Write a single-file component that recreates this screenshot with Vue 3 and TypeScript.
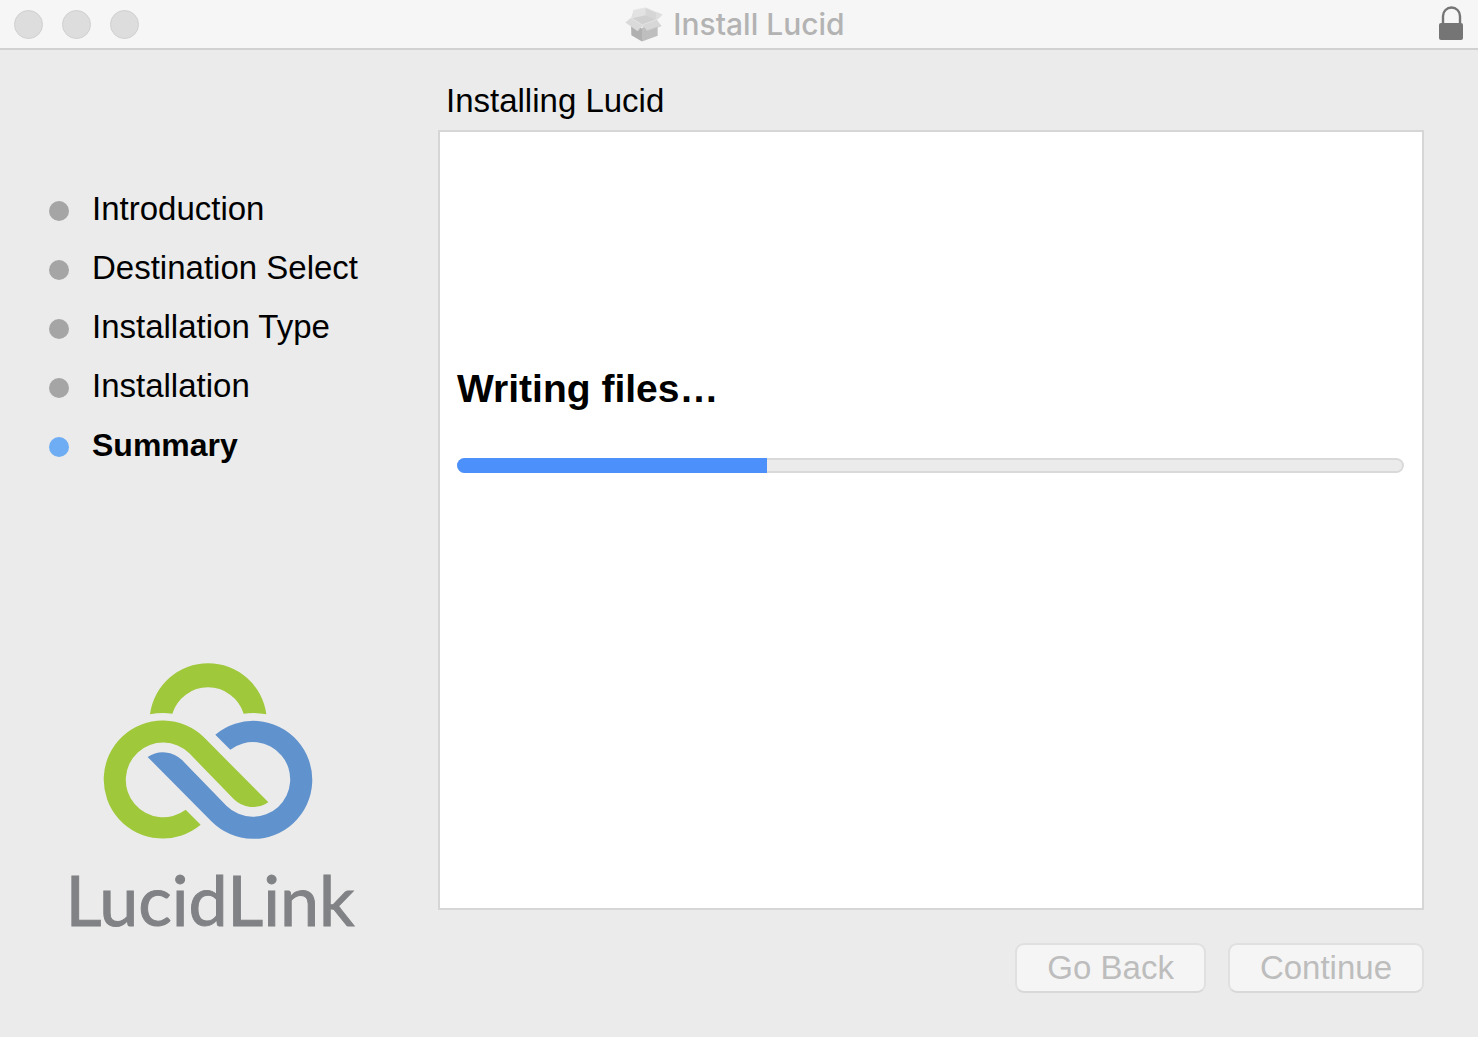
<script setup lang="ts">
import { ref } from 'vue'

interface Step {
  label: string
  current: boolean
}

const steps: Step[] = [
  { label: 'Introduction', current: false },
  { label: 'Destination Select', current: false },
  { label: 'Installation Type', current: false },
  { label: 'Installation', current: false },
  { label: 'Summary', current: true },
]

const progress = ref<number>(32.7)
</script>

<template>
  <div class="window">
    <header class="titlebar">
      <div class="lights">
        <button class="light" type="button" disabled aria-label="Close"></button>
        <button class="light" type="button" disabled aria-label="Minimize"></button>
        <button class="light" type="button" disabled aria-label="Zoom"></button>
      </div>
      <h1 class="title">
        <svg class="package" viewBox="0 0 114 104" aria-hidden="true">
          <path d="M18 50 51 64 51 103 19 84Z" fill="#b0b0b0" />
          <path d="M51 62 98 48 98 86 51 103Z" fill="#bebebe" />
          <path d="M26 9 62 2 96 17 95 38 52 54 18 34Z" fill="#dcdcdc" />
          <path d="M26 9 62 2 62 24 20 34Z" fill="#e2e2e2" />
          <path d="M62 2 96 17 95 38 62 24Z" fill="#d6d6d6" />
          <path d="M20 34 62 24 95 38 52 54Z" fill="#d0d0d0" />
          <path d="M18 32 52 53 38 72 1 46Z" fill="#dadada" />
          <path d="M52 53 95 37 109 56 66 71Z" fill="#d7d7d7" />
          <path d="M94 14 113 22 98 37 92 36Z" fill="#dedede" />
          <path d="M18 32 52 53 95 37M26 9 62 2 96 16" fill="none" stroke="#e9e9e9" stroke-width="2" />
          <path d="M38 72 52 55 66 71 109 56" fill="none" stroke="#c6c6c6" stroke-width="2" />
        </svg>
        <span>Install Lucid</span>
      </h1>
      <button class="lock" type="button" aria-label="Certificate">
        <svg viewBox="0 0 25 34" aria-hidden="true">
          <path d="M4 18V10a8.500 8.500 0 0 1 17 0V18" fill="none" stroke="#757575" stroke-width="2.400" />
          <rect x="0" y="17" width="24" height="17" rx="2" fill="#757575" />
        </svg>
      </button>
    </header>

    <div class="body">
      <aside class="sidebar">
        <ol class="steps">
          <li
            v-for="step in steps"
            :key="step.label"
            class="step"
            :class="{ current: step.current }"
            :aria-current="step.current ? 'step' : undefined"
          >
            <span class="dot"></span>
            <span class="label">{{ step.label }}</span>
          </li>
        </ol>
        <div class="brand">
          <svg class="mark" viewBox="40 38 624 525" aria-hidden="true">
            <path
              d="M178 189A176 176 0 0 1 527 189A200 200 0 0 0 459 187A112 112 0 0 0 245 187A200 200 0 0 0 178 189Z"
              fill="#9fc83a"
            />
            <path
              d="M330 520A177 177 0 1 1 342 260L533 453A82 82 0 0 1 429 443L296 306A112 112 0 1 0 285 475Z"
              fill="#9fc83a"
            />
            <path
              d="M374 250A177 177 0 1 1 362 510L171 317A82 82 0 0 1 275 327L408 464A112 112 0 1 0 419 295Z"
              fill="#6092cd"
            />
          </svg>
          <span class="wordmark">LucidLink</span>
        </div>
      </aside>

      <main class="content">
        <h2 class="heading">Installing Lucid</h2>
        <section class="panel">
          <label class="status" for="install-progress">Writing files…</label>
          <progress id="install-progress" class="bar" max="100" :value="progress"></progress>
        </section>
        <footer class="actions">
          <button class="action" type="button" disabled>Go Back</button>
          <button class="action" type="button" disabled>Continue</button>
        </footer>
      </main>
    </div>
  </div>
</template>

<style>
body {
  margin: 0;
  background: #ebebeb;
}
</style>

<style scoped>
.window {
  display: flex;
  flex-direction: column;
  min-height: 100vh;
  background: #ebebeb;
  color: #000;
  font-family: 'Liberation Sans', Arial, sans-serif;
  font-size: 33px;
  line-height: 38px;
}

.titlebar {
  display: grid;
  grid-template-columns: 1fr auto 1fr;
  align-items: center;
  height: 48px;
  padding: 0 14px;
  background: #f6f6f6;
  border-bottom: 2px solid #d1d1d1;
}

.lights {
  display: flex;
  gap: 19px;
}

.light {
  width: 29px;
  height: 29px;
  padding: 0;
  border: 1px solid #d0d0d0;
  border-radius: 50%;
  background: #dddddd;
}

.title {
  display: flex;
  align-items: center;
  gap: 10px;
  margin: 0;
  padding-right: 8px;
  color: #b3b3b3;
  font-family: Inter, sans-serif;
  font-size: 30px;
  font-weight: 500;
  line-height: 40px;
}

.package {
  width: 38px;
  height: 35px;
}

.lock {
  justify-self: end;
  width: 25px;
  height: 36px;
  padding: 0 0 2px;
  border: 0;
  background: none;
}

.lock svg {
  display: block;
  width: 25px;
  height: 34px;
}

.body {
  display: grid;
  flex: 1;
  grid-template-columns: 438px 1fr;
}

.sidebar {
  display: flex;
  flex-direction: column;
  justify-content: space-between;
  padding: 131px 0 94px;
}

.steps {
  margin: 0;
  padding: 0 0 0 49px;
  list-style: none;
}

.step {
  display: flex;
  align-items: center;
  gap: 23px;
  height: 59px;
}

.step.current {
  font-size: 32px;
  font-weight: 700;
}

.label {
  padding-bottom: 3px;
}

.dot {
  width: 20px;
  height: 20px;
  border-radius: 50%;
  background: #a5a5a5;
}

.current .dot {
  background: #6eadf3;
}

.brand {
  display: flex;
  flex-direction: column;
  align-items: center;
  gap: 16px;
  width: 416px;
}

.mark {
  width: 208px;
  height: 175px;
  overflow: visible;
}

.wordmark {
  color: #808285;
  font-family: Lato, sans-serif;
  font-size: 70px;
  font-weight: 400;
  line-height: 88px;
  padding-left: 4px;
  -webkit-text-stroke: 1px #808285;
}

.content {
  display: flex;
  flex-direction: column;
  padding: 32px 54px 44px 0;
}

.heading {
  margin: 0 0 10px 8px;
  font-size: 33px;
  font-weight: 400;
}

.panel {
  display: flex;
  flex: 1;
  flex-direction: column;
  padding: 233px 18px 0 17px;
  background: #fff;
  border: 2px solid #d6d6d6;
}

.status {
  font-size: 39px;
  font-weight: 700;
  line-height: 48px;
}

.bar {
  width: 100%;
  height: 15px;
  margin-top: 45px;
  appearance: none;
  border: 0;
  border-radius: 8px;
  overflow: hidden;
}

.bar::-webkit-progress-bar {
  box-sizing: border-box;
  background: #ebebeb;
  border-radius: 8px;
  box-shadow: inset 0 0 0 2px #d9d9d9;
}

.bar::-webkit-progress-value {
  background: #4b90fb;
}

.actions {
  display: flex;
  justify-content: flex-end;
  gap: 22px;
  margin-top: 33px;
}

.action {
  height: 50px;
  padding: 0 30px;
  color: #bdbdbd;
  background: #f5f5f5;
  border: 2px solid #e0e0e0;
  border-bottom-color: #d8d8d8;
  border-radius: 9px;
  font-family: inherit;
  font-size: 33px;
  line-height: 38px;
}
</style>
